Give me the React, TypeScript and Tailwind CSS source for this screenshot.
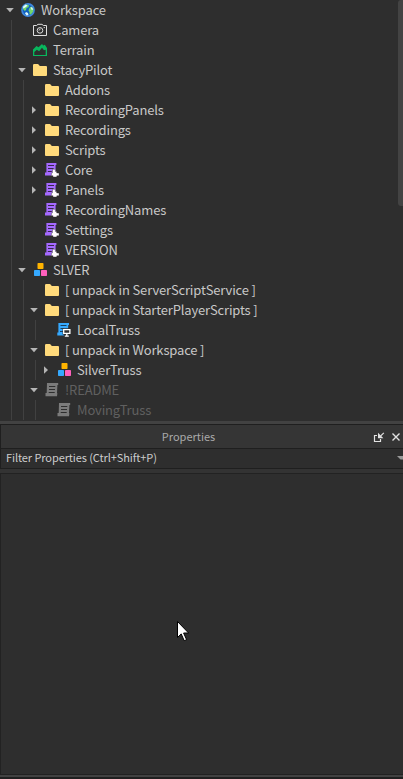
import type { ReactNode } from 'react';

type IconName = 'world' | 'camera' | 'terrain' | 'folder' | 'module' | 'model' | 'local' | 'script';
type Arrow = 'open' | 'closed' | 'none';

interface Item {
  level: number;
  icon: IconName;
  name: string;
  arrow?: Arrow;
  dim?: boolean;
}

const items: Item[] = [
  { level: 0, icon: 'world', name: 'Workspace', arrow: 'open' },
  { level: 1, icon: 'camera', name: 'Camera' },
  { level: 1, icon: 'terrain', name: 'Terrain' },
  { level: 1, icon: 'folder', name: 'StacyPilot', arrow: 'open' },
  { level: 2, icon: 'folder', name: 'Addons' },
  { level: 2, icon: 'folder', name: 'RecordingPanels', arrow: 'closed' },
  { level: 2, icon: 'folder', name: 'Recordings', arrow: 'closed' },
  { level: 2, icon: 'folder', name: 'Scripts', arrow: 'closed' },
  { level: 2, icon: 'module', name: 'Core', arrow: 'closed' },
  { level: 2, icon: 'module', name: 'Panels', arrow: 'closed' },
  { level: 2, icon: 'module', name: 'RecordingNames' },
  { level: 2, icon: 'module', name: 'Settings' },
  { level: 2, icon: 'module', name: 'VERSION' },
  { level: 1, icon: 'model', name: 'SLVER', arrow: 'open' },
  { level: 2, icon: 'folder', name: '[ unpack in ServerScriptService ]' },
  { level: 2, icon: 'folder', name: '[ unpack in StarterPlayerScripts ]', arrow: 'open' },
  { level: 3, icon: 'local', name: 'LocalTruss' },
  { level: 2, icon: 'folder', name: '[ unpack in Workspace ]', arrow: 'open' },
  { level: 3, icon: 'model', name: 'SilverTruss', arrow: 'closed' },
  { level: 2, icon: 'script', name: '!README', arrow: 'open', dim: true },
  { level: 3, icon: 'script', name: 'MovingTruss', dim: true },
];

const icons: Record<IconName, ReactNode> = {
  world: (
    <>
      <circle cx="7" cy="7" r="6.9" fill="#3f87dc" />
      <circle cx="7" cy="7" r="5.2" fill="#1261bd" />
      <path d="M2 4 5 1.5l3 .7-.5 2L5.5 5 5 7 3.8 8 2 6zM8.5 5l2-1.5L12.6 6l-.7 3-2 2.6-1.5-.3.2-2L7.5 7.5z" fill="#72d66b" />
      <path d="m2 3.8 2.5-2.2 2 1L5 4 2.4 5.5zM5 9l2 1 .5 2-1.8.5L4 10.5zM9.5 4.2l1.8.3.8 2-1.4.6z" fill="#e0faff" />
    </>
  ),
  camera: (
    <g fill="none" stroke="#dedede" strokeWidth="1">
      <path d="M.5 2.5h3L5 1.3h4l1.3 1.2h3.2v10H.5z" />
      <circle cx="7" cy="7.4" r="2.8" />
      <path d="M6 7.6c0-1 .5-1.5 1.5-1.5M10.7 4.6h1.2" />
    </g>
  ),
  terrain: (
    <>
      <path d="M0 13V6.5L3.5 3l2 1.3L9 .9l1.2 1.5 1.6-.6L14 5v8z" fill="#08b75d" />
      <path d="M1.3 11.9V9l2.6-2.2 2.2 1.4L9 4.7l2 2.6 1.7-.6v5.2z" fill="#2e2e2e" />
    </>
  ),
  folder: <path d="M0 2.2Q0 1 1.2 1h3.5q.5 0 .9.5L6.8 3H13q1 0 1 1v8q0 1-1 1H1q-1 0-1-1z" fill="#ffda7b" />,
  module: (
    <>
      <path d="M1.4 0H11.4v2h-.8v10.5H0V9.6h1.4z" fill="#a56aff" />
      <path d="M3 2.5h6M3 5.5h5.6M2.8 8.5h4" stroke="#38264e" />
      <path d="M7.5 6.3h2.9v2.2h1.3V10H14v2.8h-2.2v1.2H8v-1.3H6.4V9.8h1.1z" fill="#fff" stroke="#2e2e2e" strokeWidth=".4" />
    </>
  ),
  model: (
    <>
      <rect x="4.5" y="0" width="6" height="6" rx=".7" fill="#ffb400" />
      <rect x="1" y="7" width="6" height="6" rx=".7" fill="#35a9ff" />
      <rect x="8" y="7" width="6" height="6" rx=".7" fill="#ff60bd" />
    </>
  ),
  local: (
    <>
      <path d="M1.4 0H12v2h-.8v10.5H.3V9.6h1.1z" fill="#35a9ff" />
      <path d="M3.5 2.5h6M3.5 5.5h3M3 8.5h3" stroke="#19405e" />
      <path d="M5.6 5.2H14v6.2h-2.4V14H6.9v-2.6H5.6z" fill="#2e2e2e" />
      <path d="M6.7 6.6h6.2v3.7H6.7zM9.8 10.5v2.3M7.8 13.1h4" fill="#2e2e2e" stroke="#fff" strokeWidth="1.3" />
    </>
  ),
  script: (
    <>
      <path d="M2 0h11.2v2h-.8L12 10.2h.4l-.4 3.1H.5V10h1.2z" fill="#7b7b7b" />
      <path d="M4 3.5h6.3M4 6.5h6M3.7 9.5h6" stroke="#2e2e2e" />
    </>
  ),
};

function TreeArrow({ arrow }: { arrow: Arrow }) {
  return (
    <span className="flex h-5 w-[21px] shrink-0">
      {arrow !== 'none' && (
        <svg width="20" height="20" viewBox="0 0 20 20" fill="#b5b5b5">
          <path d={arrow === 'open' ? 'M6.2 8h7.6L10 12.2z' : 'M8 6.2v7.6l4-3.8z'} />
        </svg>
      )}
    </span>
  );
}

function TreeRow({ item }: { item: Item }) {
  return (
    <div className="flex h-5 shrink-0 items-center">
      {Array.from({ length: item.level }, (_, i) => (
        <span key={i} className="h-5 w-3 shrink-0 border-r border-[#414141]" />
      ))}
      <TreeArrow arrow={item.arrow ?? 'none'} />
      <svg className="mr-1.5 shrink-0" width="14" height="14" viewBox="0 0 14 14">
        {icons[item.icon]}
      </svg>
      <span
        className={`whitespace-pre text-[13px] leading-5 tracking-[-0.16px] ${item.dim ? 'text-[#606060]' : 'text-[#c8c8c8]'}`}
      >
        {item.name}
      </span>
    </div>
  );
}

export default function App() {
  return (
    <div className="flex h-[779px] w-[403px] flex-col overflow-hidden bg-[#2e2e2e] font-['Noto_Sans_CJK_SC',sans-serif]">
      <div className="flex h-[421px] shrink-0 justify-between">
        <div className="flex flex-col">
          {items.map((item) => (
            <TreeRow key={item.name} item={item} />
          ))}
        </div>
        <div className="h-[206px] w-[5px] rounded-l-[3px] bg-[#434343]" />
      </div>
      <div className="h-[3px] shrink-0 bg-[#424242]" />
      <div className="flex h-[25px] shrink-0 items-center border-y border-l border-[#1f1f1f] bg-[#353535]">
        <span className="w-[375px] shrink-0 pb-[2px] text-center text-[11px] leading-5 text-[#aaaaaa]">Properties</span>
      </div>
      <div className="flex h-5 shrink-0 items-center justify-between border-b border-l border-[#1f1f1f] pl-[5px]">
        <span className="pb-[4px] text-[11px] leading-4 tracking-[-0.09px] text-[#cccccc]">Filter Properties (Ctrl+Shift+P)</span>
        <svg className="mb-[2px]" width="6" height="6" viewBox="0 0 6 6">
          <path d="M0 1h6v3.5H3.5z" fill="#999" />
        </svg>
      </div>
      <div className="h-1 shrink-0 bg-[#333333]" />
      <div className="h-[302px] shrink-0 border-y border-l border-[#222222] bg-[#2e2e2e]" />
      <div className="h-[2px] shrink-0 bg-[#424242]" />
      <div className="grow bg-[#202020]" />
      <svg className="absolute left-[373px] top-[430px]" width="30" height="14" viewBox="0 0 30 14" fill="none" stroke="#e2e2e2">
        <path d="M4 5.5H1.5v6h6V9" strokeWidth="1.2" />
        <path d="m7.5 6.2 3.3-3.4" strokeWidth="1.2" />
        <path d="M5 2.8v5.4h5.4z" fill="#e2e2e2" stroke="none" />
        <path d="m19.5 3.5 7 7m0-7-7 7" strokeWidth="1.4" />
      </svg>
      <svg className="absolute left-[177px] top-[621px]" width="13" height="22" viewBox="0 0 13 22">
        <path d="M.5.5v16l3.7-3.6 3 6.8 2.4-1-3-6.7h5z" fill="#fff" stroke="#000" />
      </svg>
    </div>
  );
}
